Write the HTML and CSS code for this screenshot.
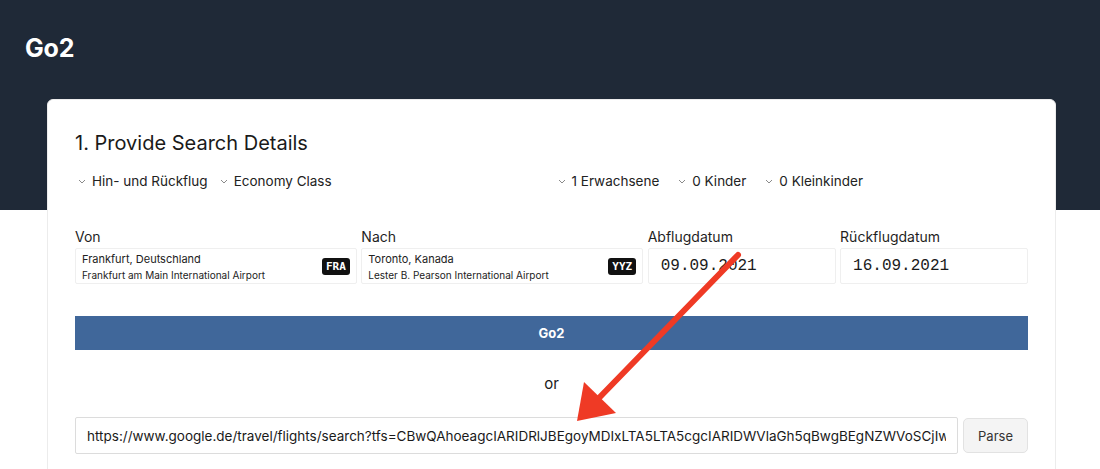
FILE: index.html
```
<!DOCTYPE html>
<html>
<head>
<meta charset="utf-8">
<link rel="stylesheet" href="styles.css">
</head>
<body>
<header class="topbar">
  <div class="brand">Go2</div>
</header>
<main class="stage">
  <section class="card">
    <h2 class="card-title">1. Provide Search Details</h2>
    <div class="options">
      <div class="opt-group left">
        <span class="select"><svg class="chev" viewBox="0 0 8 5"><path d="M1 1l3 3 3-3"/></svg>Hin- und Rückflug</span>
        <span class="select"><svg class="chev" viewBox="0 0 8 5"><path d="M1 1l3 3 3-3"/></svg>Economy Class</span>
      </div>
      <div class="opt-group right">
        <span class="select"><svg class="chev" viewBox="0 0 8 5"><path d="M1 1l3 3 3-3"/></svg>1 Erwachsene</span>
        <span class="select"><svg class="chev" viewBox="0 0 8 5"><path d="M1 1l3 3 3-3"/></svg>0 Kinder</span>
        <span class="select"><svg class="chev" viewBox="0 0 8 5"><path d="M1 1l3 3 3-3"/></svg>0 Kleinkinder</span>
      </div>
    </div>
    <div class="fields">
      <div class="field">
        <label class="label">Von</label>
        <div class="box airport">
          <div class="ap-text">
            <div class="ap-city">Frankfurt, Deutschland</div>
            <div class="ap-name">Frankfurt am Main International Airport</div>
          </div>
          <span class="badge">FRA</span>
        </div>
      </div>
      <div class="field">
        <label class="label">Nach</label>
        <div class="box airport">
          <div class="ap-text">
            <div class="ap-city">Toronto, Kanada</div>
            <div class="ap-name">Lester B. Pearson International Airport</div>
          </div>
          <span class="badge">YYZ</span>
        </div>
      </div>
      <div class="field">
        <label class="label">Abflugdatum</label>
        <div class="box date">09.09.2021</div>
      </div>
      <div class="field">
        <label class="label">Rückflugdatum</label>
        <div class="box date">16.09.2021</div>
      </div>
    </div>
    <button class="go">Go2</button>
    <div class="or">or</div>
    <div class="url-row">
      <input class="url" type="text" value="https://www.google.de/travel/flights/search?tfs=CBwQAhoeagcIARIDRlJBEgoyMDIxLTA5LTA5cgcIARIDWVlaGh5qBwgBEgNZWVoSCjIwMjEtMDktMTZwAYIBCwj___________AUABSAGYAQE">
      <button class="parse">Parse</button>
    </div>
  </section>
</main>
<svg class="arrow" viewBox="0 0 1100 469" width="1100" height="469">
  <line x1="738" y1="255" x2="597" y2="400" stroke="#ef3a25" stroke-width="6" stroke-linecap="round"/>
  <polygon points="577,421 584,382 616,413" fill="#ef3a25"/>
</svg>
</body>
</html>
```
FILE: styles.css
```
* { box-sizing: border-box; }
html, body { margin: 0; padding: 0; }
body {
  width: 1100px;
  height: 469px;
  overflow: hidden;
  position: relative;
  font-family: Inter, "Noto Sans", "Liberation Sans", sans-serif;
  color: #1c1c1c;
  background: #ffffff;
}
.topbar {
  background: #1f2937;
  height: 99px;
  padding: 34px 0 0 25px;
}
.brand {
  color: #ffffff;
  font-weight: 700;
  font-size: 25px;
  line-height: 29px;
  letter-spacing: -0.2px;
}
.stage {
  background: linear-gradient(#1f2937 111px, #ffffff 111px);
  padding: 0 44px 0 47px;
  height: 370px;
  overflow: hidden;
}
.card {
  background: #ffffff;
  border: 1px solid #ececec;
  border-radius: 6px;
  padding: 29px 27px 40px 27px;
  height: 400px;
}
.card-title {
  margin: 0;
  font-size: 20px;
  font-weight: 400;
  line-height: 28px;
  color: #1a1a1a;
}
.options {
  margin-top: 14px;
  display: grid;
  grid-template-columns: 1fr 1fr;
  column-gap: 8px;
  font-size: 13.5px;
  line-height: 20px;
}
.opt-group { display: flex; align-items: center; }
.opt-group.left { gap: 12px; padding-left: 3px; }
.opt-group.right { gap: 19px; padding-left: 2px; }
.select { display: inline-flex; align-items: center; gap: 6px; color: #222; }
.chev {
  width: 8px;
  height: 5px;
  fill: none;
  stroke: #8a8a8a;
  stroke-width: 1;
}
.fields {
  margin-top: 36px;
  display: grid;
  grid-template-columns: 3fr 3fr 2fr 2fr;
  column-gap: 4.5px;
}
.field { display: flex; flex-direction: column; }
.label {
  font-size: 14px;
  line-height: 20px;
  color: #1f1f1f;
  margin-bottom: 1px;
}
.box {
  height: 36px;
  border: 1px solid #efefef;
  border-radius: 2px;
  background: #fff;
}
.airport {
  display: flex;
  align-items: center;
  justify-content: space-between;
  padding: 0 6px 0 6px;
}
.ap-text { display: flex; flex-direction: column; gap: 3px; padding-top: 1px; }
.ap-city { font-size: 11px; line-height: 13px; color: #222; }
.ap-name { font-size: 10px; line-height: 12px; color: #222; }
.badge {
  background: #111;
  color: #fff;
  font-family: "DejaVu Sans Mono", "Liberation Mono", monospace;
  font-weight: 700;
  font-size: 11px;
  line-height: 17px;
  padding: 0 4px;
  border-radius: 3px;
}
.date {
  display: flex;
  align-items: center;
  padding-left: 12px;
  font-family: "Liberation Mono", "DejaVu Sans Mono", monospace;
  font-size: 16px;
  color: #1a1a1a;
}
.go {
  display: block;
  width: 100%;
  margin-top: 32px;
  height: 34px;
  border: none;
  background: #40679a;
  color: #ffffff;
  font-family: inherit;
  font-weight: 700;
  font-size: 13px;
}
.or {
  margin-top: 24px;
  text-align: center;
  font-size: 15px;
  line-height: 20px;
  color: #1a1a1a;
}
.url-row {
  margin-top: 23px;
  display: flex;
  gap: 5px;
}
.url {
  flex: 1;
  height: 37px;
  border: 1px solid #dcdcdc;
  border-radius: 2px;
  padding: 0 11px;
  font-family: inherit;
  font-size: 13.5px;
  color: #1a1a1a;
  outline: none;
}
.parse {
  width: 65px;
  height: 35px;
  margin-top: 1px;
  border: 1px solid #e2e2e2;
  border-radius: 5px;
  background: #f4f4f4;
  color: #333;
  font-family: inherit;
  font-size: 13px;
}
.arrow {
  position: absolute;
  top: 0;
  left: 0;
  pointer-events: none;
}
```
